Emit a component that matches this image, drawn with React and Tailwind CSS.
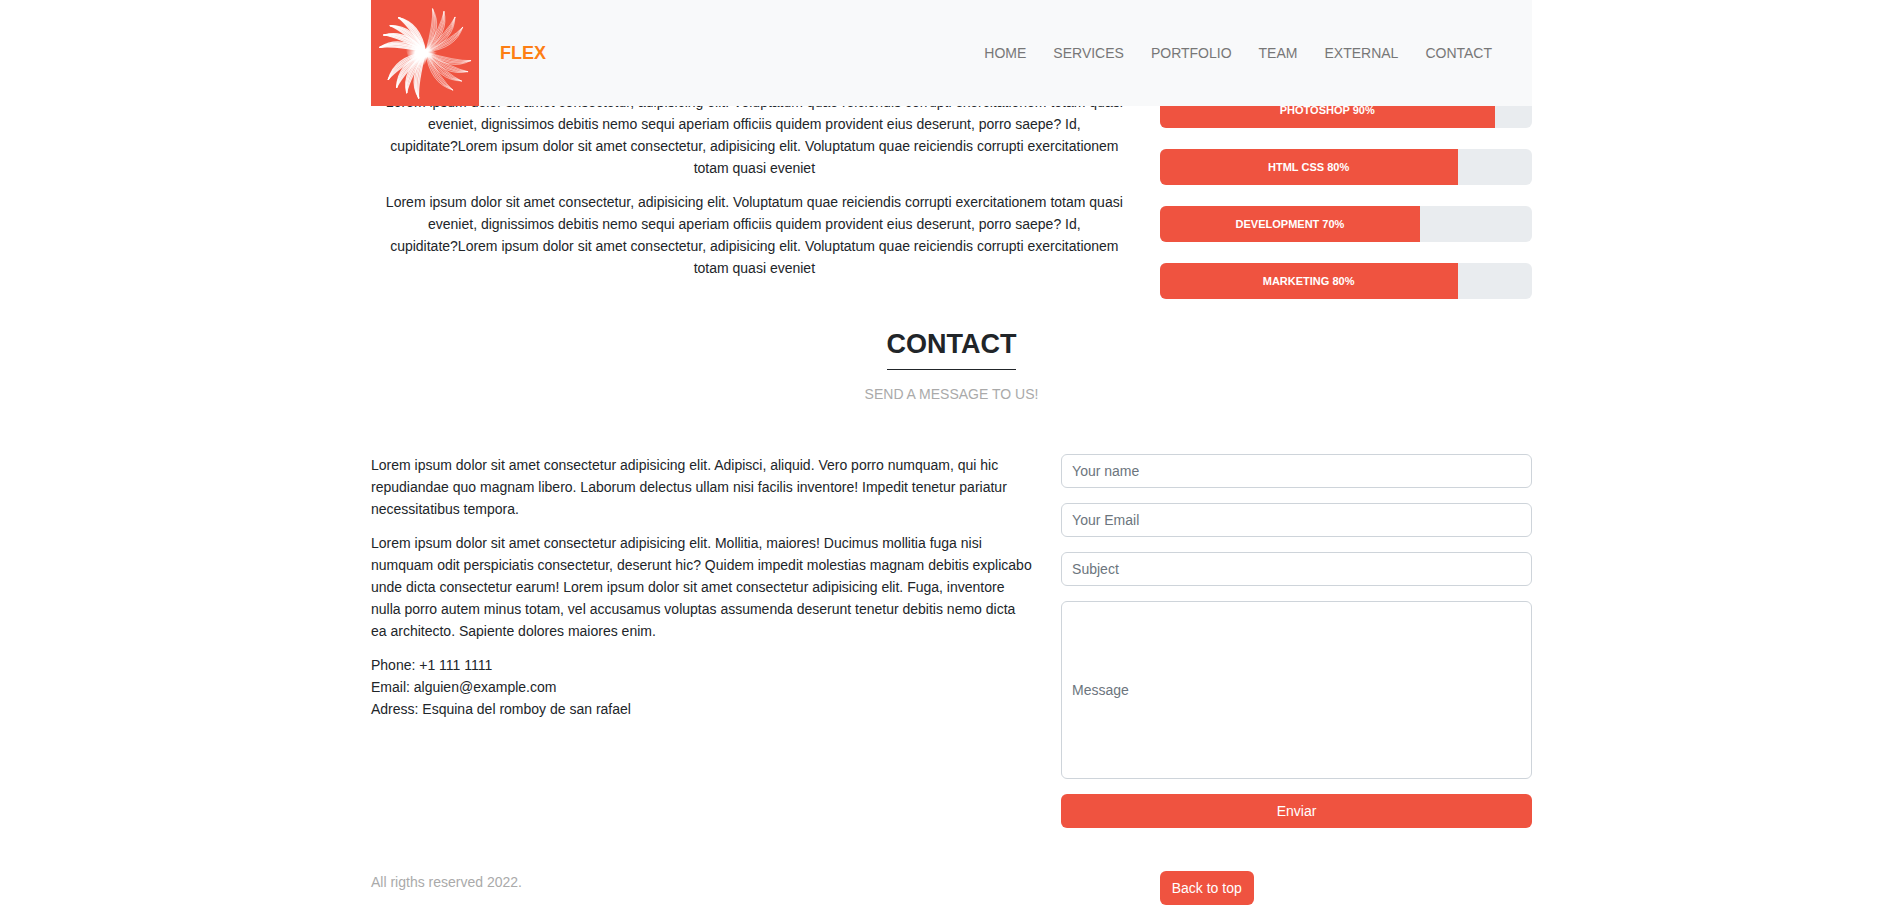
const CENTER = [179, 156];

const PLUMES = [
  { tips: [[200, 27], [234, 35], [267, 52], [290, 82]], width: 2.2, stroke: 0.65, fill: 0.12 },
  { tips: [[98, 53], [73, 77], [54, 105], [42, 142]], width: 3.8, stroke: 0.85, fill: 0.5 },
  { tips: [[67, 238], [92, 262], [122, 278], [158, 294]], width: 3.6, stroke: 0.8, fill: 0.45 },
  { tips: [[314, 182], [305, 215], [286, 243], [260, 270]], width: 2.2, stroke: 0.65, fill: 0.12 },
];

const SPREAD = [6, 11, 17, 22, 28];

function control([x, y], degrees) {
  const [cx, cy] = CENTER;
  const dx = x - cx;
  const dy = y - cy;
  const a = (degrees * Math.PI) / 180;
  const k = 0.68;
  const qx = cx + k * (dx * Math.cos(a) - dy * Math.sin(a));
  const qy = cy + k * (dx * Math.sin(a) + dy * Math.cos(a));
  return `${qx.toFixed(1)} ${qy.toFixed(1)}`;
}

function strand(tip, degrees) {
  return `M${CENTER.join(" ")}Q${control(tip, degrees)} ${tip.join(" ")}`;
}

function feather(tip) {
  return `${strand(tip, SPREAD[0])}Q${control(tip, SPREAD[SPREAD.length - 1])} ${CENTER.join(" ")}Z`;
}

function Logo() {
  return (
    <svg viewBox="15 0 324 318" className="h-[106px] w-[108px] shrink-0 bg-[#ef5340]" role="img" aria-label="Flex">
      <defs>
        <radialGradient id="core">
          <stop offset="0.4" stopColor="#fff" />
          <stop offset="1" stopColor="#fff" stopOpacity="0" />
        </radialGradient>
      </defs>
      {PLUMES.map((plume, i) => (
        <g key={i} stroke="#fff" strokeLinecap="round" strokeWidth={plume.width} strokeOpacity={plume.stroke}>
          {plume.tips.map((tip) => (
            <path key={`${tip}`} d={feather(tip)} fill="#fff" fillOpacity={plume.fill} stroke="none" />
          ))}
          {plume.tips.map((tip) => SPREAD.map((deg) => <path key={`${tip}-${deg}`} d={strand(tip, deg)} fill="none" />))}
        </g>
      ))}
      <path d="M179 148L196 130L192 148L214 158L196 166L204 184L184 170L176 196L150 190L126 168L118 144L132 124L160 134Z" fill="url(#core)" />
    </svg>
  );
}

const LINKS = ["Home", "Services", "Portfolio", "Team", "External", "Contact"];

const SKILLS = [
  { name: "PHOTOSHOP", value: 90 },
  { name: "HTML CSS", value: 80 },
  { name: "DEVELOPMENT", value: 70 },
  { name: "MARKETING", value: 80 },
];

const FIELDS = [
  { id: "name", label: "Your name", type: "text", height: "h-[34px]" },
  { id: "email", label: "Your Email", type: "email", height: "h-[34px]" },
  { id: "subject", label: "Subject", type: "text", height: "h-[34px]" },
  { id: "message", label: "Message", type: "text", height: "h-[178px]" },
];

function Header() {
  return (
    <header className="sticky top-0 z-10 flex items-center bg-[#f8f9fa]">
      <Logo />
      <a href="#home" className="ml-[21px] text-lg font-bold text-[#fd7e14]">
        FLEX
      </a>
      <nav className="mr-10 ml-auto flex gap-[27px] text-[#777] uppercase">
        {LINKS.map((link) => (
          <a key={link} href={`#${link.toLowerCase()}`}>
            {link}
          </a>
        ))}
      </nav>
    </header>
  );
}

function About() {
  return (
    <p>
      Lorem ipsum dolor sit amet consectetur, adipisicing elit. Voluptatum quae reiciendis corrupti exercitationem totam
      quasi eveniet, dignissimos debitis nemo sequi aperiam officiis quidem provident eius deserunt, porro saepe? Id,{" "}
      <span className="whitespace-nowrap">cupiditate?Lorem</span> ipsum dolor sit amet consectetur, adipisicing elit.
      Voluptatum quae reiciendis corrupti exercitationem totam quasi eveniet
    </p>
  );
}

function Skills() {
  return (
    <section className="grid grid-cols-12 gap-x-[22px]">
      <div className="col-span-8 space-y-3 px-2 text-center">
        <About />
        <About />
      </div>
      <div className="col-span-4 flex flex-col gap-[21px] pt-px">
        {SKILLS.map((skill) => (
          <div key={skill.name} className="h-9 overflow-hidden rounded-md bg-[#e9ecef]">
            <div
              className="flex h-full items-center justify-center bg-[#ef5340] text-[11px] font-bold text-white"
              style={{ width: `${skill.value}%` }}
            >
              {skill.name} {skill.value}%
            </div>
          </div>
        ))}
      </div>
    </section>
  );
}

function Contact() {
  return (
    <section id="contact">
      <div className="mt-[27px] flex flex-col items-center">
        <h2 className="border-b border-[#212529] pb-[7px] text-[27px] leading-9 font-bold">CONTACT</h2>
        <p className="mt-[13px] text-[#aaa]">SEND A MESSAGE TO US!</p>
      </div>
      <div className="mt-[49px] grid grid-cols-12 gap-x-[22px]">
        <div className="col-span-7 space-y-3 pr-1">
          <p>
            Lorem ipsum dolor sit amet consectetur adipisicing elit. Adipisci, aliquid. Vero porro numquam, qui hic
            repudiandae quo magnam libero. Laborum delectus ullam nisi facilis inventore! Impedit tenetur pariatur
            necessitatibus tempora.
          </p>
          <p>
            Lorem ipsum dolor sit amet consectetur adipisicing elit. Mollitia, maiores! Ducimus mollitia fuga nisi
            numquam odit perspiciatis consectetur, deserunt hic? Quidem impedit molestias magnam debitis explicabo unde
            dicta consectetur earum! Lorem ipsum dolor sit amet consectetur adipisicing elit. Fuga, inventore nulla
            porro autem minus totam, vel accusamus voluptas assumenda deserunt tenetur debitis nemo dicta{" "}
            <span className="whitespace-nowrap">ea architecto.</span> Sapiente dolores maiores enim.
          </p>
          <address className="not-italic">
            Phone: +1 111 1111
            <br />
            Email: alguien@example.com
            <br />
            Adress: Esquina del romboy de san rafael
          </address>
        </div>
        <form className="col-span-5 flex flex-col gap-[15px]">
          {FIELDS.map((field) => (
            <input
              key={field.id}
              id={field.id}
              type={field.type}
              aria-label={field.label}
              placeholder={field.label}
              className={`${field.height} w-full rounded-md border border-[#ced4da] bg-white px-[10px] placeholder:text-[#6c757d]`}
            />
          ))}
          <button type="button" className="h-[34px] w-full rounded-md bg-[#ef5340] text-white">
            Enviar
          </button>
        </form>
      </div>
    </section>
  );
}

export default function App() {
  return (
    <div className="min-h-screen bg-white pl-[7px] font-['Liberation_Sans',Arial,sans-serif] text-[14px] leading-[22px] text-[#212529]">
      <div className="mx-auto max-w-[1161px]">
        <Header />
        <main className="-mt-[15px]">
          <Skills />
          <Contact />
        </main>
        <footer className="mt-[43px] grid grid-cols-12 gap-x-[22px] pb-4">
          <p className="col-span-8 text-[#aaa]">All rigths reserved 2022.</p>
          <div className="col-span-4">
            <button type="button" className="h-[34px] rounded-md bg-[#ef5340] px-3 text-white">
              Back to top
            </button>
          </div>
        </footer>
      </div>
    </div>
  );
}
